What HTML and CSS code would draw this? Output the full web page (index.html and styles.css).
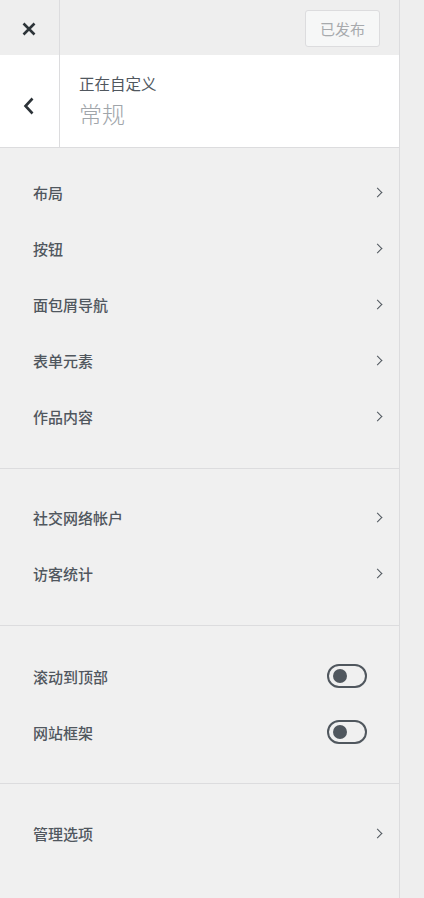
FILE: index.html
```html
<!DOCTYPE html>
<html lang="zh-CN">
<head>
<meta charset="utf-8">
<title>正在自定义 常规</title>
<link rel="stylesheet" href="styles.css">
</head>
<body>
<div class="layout">
  <aside class="sidebar">
    <header class="topbar">
      <button class="close-btn" aria-label="关闭">
        <svg width="14" height="14" viewBox="0 0 14 14"><path d="M1.5 1.5L12.5 12.5M12.5 1.5L1.5 12.5" stroke="#2c3338" stroke-width="2.6" fill="none"/></svg>
      </button>
      <div class="topbar-actions">
        <button class="publish-btn" disabled>已发布</button>
      </div>
    </header>
    <div class="title-bar">
      <button class="back-btn" aria-label="返回">
        <svg width="12" height="18" viewBox="0 0 12 18"><path d="M9.5 1.5L2.5 9L9.5 16.5" stroke="#2c3338" stroke-width="2.6" fill="none"/></svg>
      </button>
      <div class="title-text">
        <span class="title-action">正在自定义</span>
        <span class="title-main">常规</span>
      </div>
    </div>

    <ul class="section first">
      <li class="row"><span>布局</span><i class="chev"></i></li>
      <li class="row"><span>按钮</span><i class="chev"></i></li>
      <li class="row"><span>面包屑导航</span><i class="chev"></i></li>
      <li class="row"><span>表单元素</span><i class="chev"></i></li>
      <li class="row"><span>作品内容</span><i class="chev"></i></li>
    </ul>
    <ul class="section social">
      <li class="row"><span>社交网络帐户</span><i class="chev"></i></li>
      <li class="row"><span>访客统计</span><i class="chev"></i></li>
    </ul>
    <ul class="section toggles">
      <li class="row"><span>滚动到顶部</span><i class="toggle"></i></li>
      <li class="row"><span>网站框架</span><i class="toggle"></i></li>
    </ul>
    <ul class="section last">
      <li class="row"><span>管理选项</span><i class="chev"></i></li>
    </ul>
  </aside>
  <div class="preview"></div>
</div>
</body>
</html>
```

FILE: styles.css
```css
* { box-sizing: border-box; }
html, body { margin: 0; padding: 0; height: 100%; }
body {
  font-family: "Noto Sans CJK SC", "Noto Sans", sans-serif;
  color: #50575e;
  background: #eeeeee;
}
.layout { display: flex; height: 898px; }
.sidebar {
  width: 400px;
  flex: none;
  background: #f0f0f0;
  border-right: 1px solid #dcdcde;
  display: flex;
  flex-direction: column;
}
.preview { flex: 1; background: #eeeeee; }

.topbar {
  height: 55px;
  display: flex;
  background: #eeeeee;
}
.close-btn, .back-btn {
  width: 60px;
  border: 0;
  border-right: 1px solid #dcdcde;
  background: transparent;
  padding: 0;
  display: flex;
  align-items: center;
  justify-content: center;
}
.close-btn svg { margin-left: -1px; margin-top: 2px; }
.topbar-actions {
  flex: 1;
  display: flex;
  justify-content: flex-end;
  align-items: flex-start;
  padding: 10px 19px 0 0;
}
.publish-btn {
  width: 75px;
  height: 37px;
  border: 1px solid #dcdcde;
  border-radius: 3px;
  background: #f6f7f7;
  color: #a7aaad;
  font-family: inherit;
  font-size: 15px;
  padding: 0;
}

.title-bar {
  height: 93px;
  display: flex;
  background: #ffffff;
  border-bottom: 1px solid #dcdcde;
}
.back-btn svg { margin-left: -1px; margin-top: 9px; }
.title-text {
  display: flex;
  flex-direction: column;
  padding: 15px 0 0 19px;
}
.title-action {
  font-size: 15.5px;
  line-height: 26px;
  color: #50575e;
}
.title-main {
  font-size: 23px;
  line-height: 34px;
  color: #a0a5aa;
  font-weight: 300;
}

.section {
  list-style: none;
  margin: 0;
  padding: 22px 0 22px;
  border-bottom: 1px solid #dcdcde;
}
.section.first { padding: 16px 0 24px; }
.section.social { padding: 20px 0 24px; }
.section.toggles { padding-bottom: 23px; }
.section.last { border-bottom: 0; padding-top: 21px; }
.row {
  height: 56px;
  display: flex;
  align-items: center;
  justify-content: space-between;
  padding: 0 15px 0 33px;
  font-size: 15px;
  font-weight: 500;
  color: #50575e;
}
.chev {
  width: 7px;
  height: 7px;
  border-top: 1.7px solid #50575e;
  border-right: 1.7px solid #50575e;
  transform: rotate(45deg);
  margin-right: 3px;
}
.toggle {
  position: relative;
  width: 40px;
  height: 24px;
  border: 2px solid #50575e;
  border-radius: 12px;
  margin-right: 17px;
}
.toggle::after {
  content: "";
  position: absolute;
  left: 4px;
  top: 3px;
  width: 14px;
  height: 14px;
  border-radius: 50%;
  background: #50575e;
}
```
